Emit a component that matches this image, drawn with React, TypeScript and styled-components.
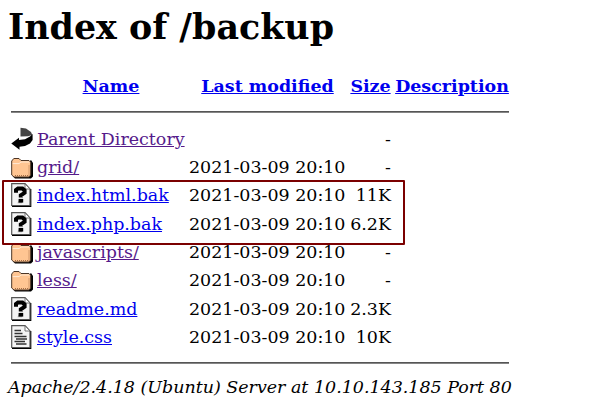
import React from "react";
import styled, { createGlobalStyle } from "styled-components";

const Global = createGlobalStyle`
  body {
    margin: 0;
    background: #fff;
    color: #000;
    font-family: "DejaVu Serif", serif;
    font-size: 17.47px;
    overflow: hidden;
  }
`;
const Page = styled.main`
  position: relative;
  width: 602px;
  height: 407px;
  overflow: hidden;
  padding: 4px 0 0 8px;
  box-sizing: border-box;
`;
const Title = styled.h1`
  margin: 0;
  height: 46px;
  line-height: 46px;
  font-size: 34.85px;
  white-space: nowrap;
`;
const Columns = styled.div`
  display: grid;
  grid-template-columns: 22px 148px 157px 41px 114px;
  column-gap: 4px;
  margin-left: 3px;
  align-items: center;
  white-space: nowrap;
`;
const Header = styled(Columns)`
  height: 28px;
  margin: 22px 0 11px 3px;
  font-weight: bold;
`;
const Heading = styled.span`
  display: flex;
  justify-content: center;
`;
const Row = styled(Columns)`
  height: 28.33px;
`;
const Link = styled.a<{ $visited?: boolean }>`
  color: ${(p) => (p.$visited ? "#551a8b" : "#0000ee")};
  text-decoration: underline;
`;
const Size = styled.span`
  text-align: right;
`;
const Rule = styled.div`
  width: 498px;
  height: 2px;
  margin-left: 3px;
  box-sizing: border-box;
  border-top: 1px solid #555;
  border-bottom: 1px solid #858585;
`;
const Listing = styled.section`
  padding: 11.6px 0 11.2px;
`;
const Footer = styled.address`
  margin-top: 13px;
  white-space: nowrap;
`;
const Highlight = styled.div`
  position: absolute;
  left: 2px;
  top: 180px;
  width: 403px;
  height: 65px;
  box-sizing: border-box;
  border: 2px solid #7b0000;
  border-radius: 1px;
`;
const IconBox = styled.svg`
  display: block;
  width: 22px;
  height: 24px;
  overflow: visible;
`;

type Kind = "back" | "folder" | "unknown" | "text";

const Sheet = () => (
  <>
    <path d="M1 23.3H19.6V6" fill="none" stroke="#000" strokeWidth="1.5" />
    <path d="M.7.6H14L19 6V22.5H.7Z" fill="#f4f4f4" stroke="#555" strokeWidth="1.2" />
    <path d="M14 .8V6H19Z" fill="#fff" stroke="#666" strokeWidth=".9" />
  </>
);

const Icon = ({ kind }: { kind: Kind }) => (
  <IconBox viewBox="0 0 22 24">
    {kind === "back" && (
      <>
        <path d="M9.5 .8L15 1.5L20 5L21.3 8L17 9.2L9.5 9.5Z" fill="#444" />
        <path d="M21.6 7V13L19 16.5L14 19L8.5 19.7V22.8L.3 16.5L8 10.8V13L14 12.2L19 9.5Z" fill="#000" />
      </>
    )}
    {kind === "folder" && (
      <>
        <path d="M2 21.5L4 23.4H20L22 21.5V8L20 5" fill="#000" />
        <path d="M.7 6L2.8 3.5H8L10 5.5H18L19.7 7.5V20L18 22H3L.7 20Z" fill="#ffc592" stroke="#4b3526" />
        <path d="M1.7 8.6H8L10 7H18.5" fill="none" stroke="#ffe9d4" />
        <path d="M4 20.5H18V10" fill="none" stroke="#a56d45" strokeDasharray="1 1" />
      </>
    )}
    {kind === "unknown" && (
      <>
        <Sheet />
        <path d="M6.5 20.2H11V17.4H7.5" fill="#aaa" />
        <path d="M5 9.8V6.9L7 5.4H11.4L13.6 7.4V9.8L9.8 12.4V14.4" fill="none" stroke="#000" strokeWidth="4" />
        <path d="M7.6 15.9H12.2V19.6H7.6Z" />
      </>
    )}
    {kind === "text" && (
      <>
        <Sheet />
        <path d="M3.5 5.5H10M3.5 8.5H11.5M3.5 11.5H15.5M5 14H16M3.5 16.5H14M5 19H15.5" stroke="#333" strokeWidth="1.6" />
      </>
    )}
  </IconBox>
);

const entries: { kind: Kind; name: string; date?: string; size: string; visited?: boolean }[] = [
  { kind: "back", name: "Parent Directory", size: "-", visited: true },
  { kind: "folder", name: "grid/", date: "2021-03-09 20:10", size: "-", visited: true },
  { kind: "unknown", name: "index.html.bak", date: "2021-03-09 20:10", size: "11K" },
  { kind: "unknown", name: "index.php.bak", date: "2021-03-09 20:10", size: "6.2K" },
  { kind: "folder", name: "javascripts/", date: "2021-03-09 20:10", size: "-", visited: true },
  { kind: "folder", name: "less/", date: "2021-03-09 20:10", size: "-", visited: true },
  { kind: "unknown", name: "readme.md", date: "2021-03-09 20:10", size: "2.3K" },
  { kind: "text", name: "style.css", date: "2021-03-09 20:10", size: "10K" },
];

export default function App() {
  return (
    <Page>
      <Global />
      <Title>Index of /backup</Title>
      <Header>
        <span />
        {["Name", "Last modified", "Size", "Description"].map((h) => (
          <Heading key={h}><Link>{h}</Link></Heading>
        ))}
      </Header>
      <Rule />
      <Listing>
        {entries.map((e) => (
          <Row key={e.name}>
            <Icon kind={e.kind} />
            <span><Link $visited={e.visited}>{e.name}</Link></span>
            <span>{e.date}</span>
            <Size>{e.size}</Size>
          </Row>
        ))}
      </Listing>
      <Rule />
      <Footer>Apache/2.4.18 (Ubuntu) Server at 10.10.143.185 Port 80</Footer>
      <Highlight />
    </Page>
  );
}
